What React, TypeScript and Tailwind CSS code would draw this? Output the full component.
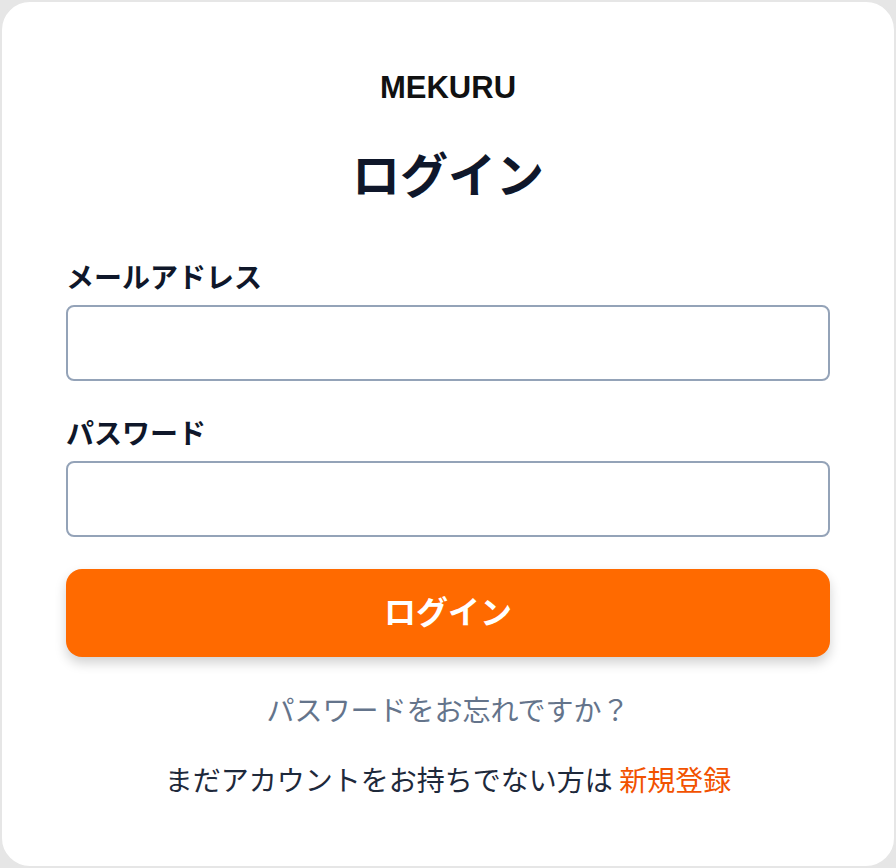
import { useState } from 'react'

const jp = "font-['Noto_Sans_CJK_JP','Noto_Sans',sans-serif]"

function Field({ label, type, value, onChange }: { label: string; type: string; value: string; onChange: (v: string) => void }) {
  return (
    <label className="block">
      <span className={`block text-[28px] leading-[36px] font-bold text-[#0f172a] ${jp}`}>{label}</span>
      <input
        type={type}
        value={value}
        onChange={(e) => onChange(e.target.value)}
        className="mt-[11px] block w-full h-[76px] rounded-[8px] border-2 border-[#94a3b8] bg-white px-4 text-[24px] outline-none"
      />
    </label>
  )
}

export default function App() {
  const [email, setEmail] = useState('')
  const [password, setPassword] = useState('')

  return (
    <div className="w-[896px] h-[868px] bg-[#e6e6e6]">
      <div className="h-full rounded-[30px] border-2 border-[#e6e6e6] bg-white px-16 pt-[68px]">
        <div className="text-center text-[31px] leading-[36px] font-bold text-[#111] font-['Liberation_Sans',Arial,sans-serif]">
          MEKURU
        </div>
        <h1 className={`mt-[38px] text-center text-[48px] leading-[56px] font-bold text-[#0f172a] ${jp}`}>ログイン</h1>

        <div className="mt-[58px]">
          <Field label="メールアドレス" type="email" value={email} onChange={setEmail} />
        </div>
        <div className="mt-[33px]">
          <Field label="パスワード" type="password" value={password} onChange={setPassword} />
        </div>

        <button
          type="button"
          className={`mt-[32px] w-full h-[88px] pb-[6px] rounded-[16px] bg-[#ff6a00] text-white text-[32px] font-bold shadow-[0_6px_12px_rgba(0,0,0,0.18)] ${jp}`}
        >
          ログイン
        </button>

        <p className={`mt-[34px] text-center text-[28px] leading-[36px] text-[#64748b] ${jp}`}>
          パスワードをお忘れですか？
        </p>
        <p className={`mt-[34px] text-center text-[28px] leading-[36px] text-[#1e293b] ${jp}`}>
          まだアカウントをお持ちでない方は <span className="text-[#f25200]">新規登録</span>
        </p>
      </div>
    </div>
  )
}
